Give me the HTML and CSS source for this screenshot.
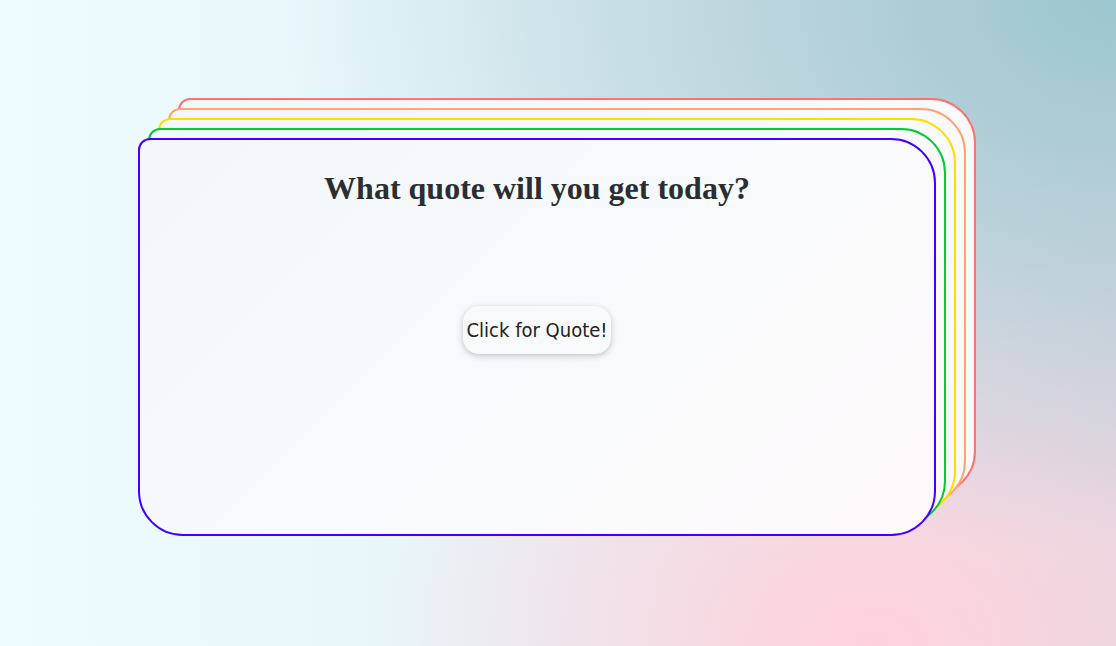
FILE: index.html
```html
<!DOCTYPE html>
<html lang="en">
<head>
<meta charset="utf-8">
<title>Quote</title>
<link rel="stylesheet" href="styles.css">
</head>
<body>
  <div class="stack">
    <div class="layer layer-red"></div>
    <div class="layer layer-orange"></div>
    <div class="layer layer-yellow"></div>
    <div class="layer layer-green"></div>
    <main class="card">
      <h1 class="title">What quote will you get today?</h1>
      <button class="quote-btn" type="button">Click for Quote!</button>
    </main>
  </div>
</body>
</html>
```

FILE: styles.css
```css
html, body {
  margin: 0;
  height: 100%;
}
body {
  background:
    radial-gradient(ellipse 75% 85% at 100% 0%, rgba(156, 199, 208, 1) 0%, rgba(156, 199, 208, 0) 100%),
    radial-gradient(ellipse 45% 60% at 78% 100%, rgba(255, 210, 220, 1) 0%, rgba(255, 210, 220, 0) 100%),
    linear-gradient(to right, #eefcff 0%, #e7f5f9 40%, #e2d9e3 100%);
  overflow: hidden;
}
.stack {
  position: relative;
  width: 838px;
  margin: 98px 0 0 138px;
  padding-top: 40px;
}
.card,
.layer {
  box-sizing: border-box;
  width: 798px;
  height: 398px;
  border: 2px solid #4400ff;
  border-radius: 12px 45px 45px 45px;
  background: linear-gradient(135deg, #f3f7f9 0%, #f7fafc 50%, #fdf8f9 100%);
}
.layer {
  position: absolute;
}
.layer-red    { left: 40px; top: 0;    border-color: #ff7070; }
.layer-orange { left: 30px; top: 10px; border-color: #ffa470; }
.layer-yellow { left: 20px; top: 20px; border-color: #ffdd00; }
.layer-green  { left: 10px; top: 30px; border-color: #00cc33; }
.card {
  position: relative;
  display: flex;
  flex-direction: column;
  align-items: center;
}
.title {
  margin: 28px 0 0;
  font-family: "Liberation Serif", "Times New Roman", serif;
  font-weight: bold;
  font-size: 32px;
  line-height: 40px;
  color: #2a2e32;
}
.quote-btn {
  margin-top: 98px;
  height: 48px;
  padding: 0 4px;
  border: none;
  border-radius: 16px;
  background: #f8f9fa;
  box-shadow: 0 2px 6px rgba(0, 0, 0, 0.22);
  font-family: "DejaVu Sans Condensed", "DejaVu Sans", sans-serif;
  font-size: 20px;
  color: #222;
}
```
